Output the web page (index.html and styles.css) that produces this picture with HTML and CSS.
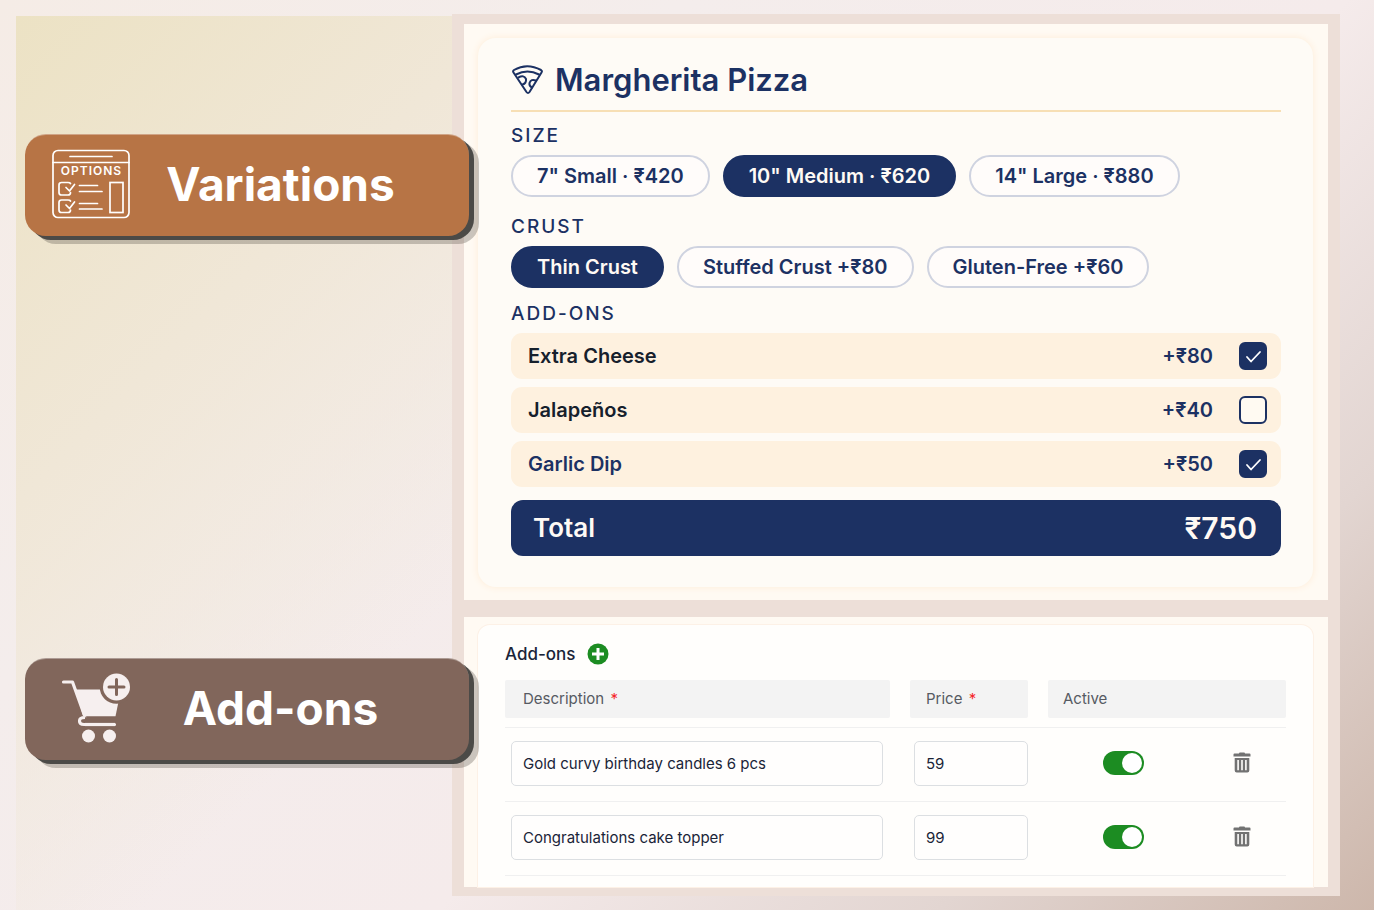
FILE: index.html
```html
<!DOCTYPE html>
<html lang="en">
<head>
<meta charset="utf-8">
<meta name="viewport" content="width=device-width, initial-scale=1">
<title>Margherita Pizza</title>
<link rel="stylesheet" href="styles.css">
</head>
<body>
<main class="stage">
  <div class="tags">
    <h2 class="tag tag-variations">
      <svg class="tag-icon" viewBox="0 0 78 70" fill="none" stroke="#fff" stroke-width="1.7" stroke-linecap="round" stroke-linejoin="round" aria-hidden="true">
        <rect x="1" y="1.5" width="76" height="67" rx="5"/>
        <path d="M1 13.5H77M18 7.5H60"/>
        <text class="icon-word" x="39.500" y="26" text-anchor="middle">OPTIONS</text>
        <path d="M27.500 36.500H45.500M27.500 42.500H50M27.500 54.500H45.500M27.500 60H50"/>
        <rect x="58" y="33.500" width="13" height="30" stroke-linejoin="miter"/>
        <path d="M18.500 34.500C18 33.500 17 33.500 16 33.500H9.500Q7 33.500 7 36V43.500Q7 46 9.500 46H16Q18.500 46 18.500 43.500M14 38.500L17.500 42L22.500 35.500"/>
        <path d="M18.500 52C18 51 17 51 16 51H9.500Q7 51 7 53.500V61Q7 63.500 9.500 63.500H16Q18.500 63.500 18.500 61M14 56L17.500 59.500L22.500 53"/>
      </svg>
      <span class="tag-text">Variations</span>
    </h2>
    <h2 class="tag tag-addons">
      <svg class="tag-icon" viewBox="0 0 78 70" aria-hidden="true">
        <g fill="none" stroke="#f6efef" stroke-width="3.200" stroke-linecap="round" stroke-linejoin="round">
          <path d="M11.500 9H20.500L32 41"/>
          <path d="M33 44.500C28 44.500 27.500 46 27.500 48Q27.500 51.500 32 51.500H62.500"/>
        </g>
        <path fill="#f6efef" d="M24 16.500H69L63.500 43.300H31Z"/>
        <path d="M33 47H64" stroke="#81665b" stroke-width="5.500"/>
        <path d="M33 51.500H63" stroke="#f6efef" stroke-width="3.200"/>
        <circle cx="64.500" cy="14" r="16.800" fill="#81665b"/>
        <circle cx="64.500" cy="14" r="13.500" fill="#f6efef"/>
        <path d="M64.500 6.500V21.500M57 14H72" stroke="#81665b" stroke-width="3" stroke-linecap="round"/>
        <circle cx="36.500" cy="63" r="6.500" fill="#f6efef"/>
        <circle cx="57.500" cy="63" r="6.500" fill="#f6efef"/>
      </svg>
      <span class="tag-text">Add-ons</span>
    </h2>
  </div>

  <div class="frame">
    <section class="panel panel-pizza">
      <form class="card pizza">
        <h1 class="pizza-title">
          <svg class="pizza-icon" viewBox="0 0 32 30" fill="none" stroke="#1c3163" stroke-width="2" stroke-linejoin="round" stroke-linecap="round" aria-hidden="true">
            <path d="M3 5Q16 -2.500 30 5Q31.500 6 30.500 7.500L18.500 27Q17 29 15.500 27L2.500 7.500Q1.500 6 3 5Z"/>
            <path d="M5 9.500Q16.500 3.500 28 9.500"/>
            <path d="M7.500 12.500Q13 9.500 15 14Q15.500 18.500 11.500 19.500"/>
            <path d="M25 15.500Q20 13.500 18.500 18Q18 21.500 21 22.500"/>
          </svg>
          Margherita Pizza
        </h1>
        <fieldset class="group">
          <legend class="group-name">SIZE</legend>
          <div class="chips">
            <label class="chip"><input type="radio" name="size">7" Small · ₹420</label>
            <label class="chip"><input type="radio" name="size" checked>10" Medium · ₹620</label>
            <label class="chip"><input type="radio" name="size">14" Large · ₹880</label>
          </div>
        </fieldset>
        <fieldset class="group">
          <legend class="group-name">CRUST</legend>
          <div class="chips">
            <label class="chip"><input type="radio" name="crust" checked>Thin Crust</label>
            <label class="chip"><input type="radio" name="crust">Stuffed Crust +₹80</label>
            <label class="chip"><input type="radio" name="crust">Gluten-Free +₹60</label>
          </div>
        </fieldset>
        <fieldset class="group">
          <legend class="group-name">ADD-ONS</legend>
          <div class="extras">
            <label class="extra">
              <span class="extra-name">Extra Cheese</span><span class="extra-price">+₹80</span>
              <span class="check"><input type="checkbox" checked><svg viewBox="0 0 28 28" aria-hidden="true"><path d="M8 15L12 19.500L21 10"/></svg></span>
            </label>
            <label class="extra">
              <span class="extra-name">Jalapeños</span><span class="extra-price">+₹40</span>
              <span class="check"><input type="checkbox"><svg viewBox="0 0 28 28" aria-hidden="true"><path d="M8 15L12 19.500L21 10"/></svg></span>
            </label>
            <label class="extra">
              <span class="extra-name extra-accent">Garlic Dip</span><span class="extra-price">+₹50</span>
              <span class="check"><input type="checkbox" checked><svg viewBox="0 0 28 28" aria-hidden="true"><path d="M8 15L12 19.500L21 10"/></svg></span>
            </label>
          </div>
        </fieldset>
        <div class="total"><span>Total</span><output class="total-sum">₹750</output></div>
      </form>
    </section>

    <section class="panel panel-addons">
      <form class="card addons">
        <div class="addons-head">
          <h2 class="addons-title">Add-ons</h2>
          <button class="add" type="button" aria-label="Add an add-on">
            <svg viewBox="0 0 22 22" aria-hidden="true"><circle cx="11" cy="11" r="10.500" fill="#1c8c22"/><path d="M11 5V17M5 11H17" stroke="#fff" stroke-width="3"/></svg>
          </button>
        </div>
        <table class="list">
          <colgroup><col><col class="col-price"><col class="col-active"><col class="col-delete"></colgroup>
          <thead>
            <tr>
              <th><div class="head-cell">Description <span class="req">*</span></div></th>
              <th><div class="head-cell head-price">Price <span class="req">*</span></div></th>
              <th colspan="2"><div class="head-cell head-active">Active</div></th>
            </tr>
          </thead>
          <tbody>
            <tr>
              <td class="cell-name"><input class="field" type="text" aria-label="Description" value="Gold curvy birthday candles 6 pcs"></td>
              <td class="cell-price"><input class="field" type="text" aria-label="Price" value="59"></td>
              <td class="cell-mid"><input class="switch" type="checkbox" role="switch" aria-label="Active" checked></td>
              <td class="cell-mid"><button class="trash" type="button" aria-label="Delete"><svg viewBox="0 0 18 22" aria-hidden="true"><path fill="#727272" fill-rule="evenodd" d="M6 1.500Q6 .5 7 .5H11Q12 .5 12 1.500H16.500Q17.500 1.500 17.500 2.500V4.500H.5V2.500Q.5 1.500 1.500 1.500ZM1.700 6H16.300V18.500Q16.300 20.500 14.300 20.500H3.700Q1.700 20.500 1.700 18.500ZM4.300 8V18.200H5.900V8ZM8.200 8V18.200H9.800V8ZM12.100 8V18.200H13.700V8Z"/></svg></button></td>
            </tr>
            <tr>
              <td class="cell-name"><input class="field" type="text" aria-label="Description" value="Congratulations cake topper"></td>
              <td class="cell-price"><input class="field" type="text" aria-label="Price" value="99"></td>
              <td class="cell-mid"><input class="switch" type="checkbox" role="switch" aria-label="Active" checked></td>
              <td class="cell-mid"><button class="trash" type="button" aria-label="Delete"><svg viewBox="0 0 18 22" aria-hidden="true"><path fill="#727272" fill-rule="evenodd" d="M6 1.500Q6 .5 7 .5H11Q12 .5 12 1.500H16.500Q17.500 1.500 17.500 2.500V4.500H.5V2.500Q.5 1.500 1.500 1.500ZM1.700 6H16.300V18.500Q16.300 20.500 14.300 20.500H3.700Q1.700 20.500 1.700 18.500ZM4.300 8V18.200H5.900V8ZM8.200 8V18.200H9.800V8ZM12.100 8V18.200H13.700V8Z"/></svg></button></td>
            </tr>
          </tbody>
        </table>
      </form>
    </section>
  </div>
</main>
</body>
</html>
```
FILE: styles.css
```css
* { box-sizing: border-box; }

:root {
  --navy: #1c3163;
  --green: #1c8c22;
}

body {
  margin: 0;
  min-height: 100vh;
  display: flex;
  font-family: Inter, "Liberation Sans", sans-serif;
  color: var(--navy);
  background: linear-gradient(135deg, #f5ece6 0%, #f4edec 30%, #f5ebeb 59%, #e2d5d1 81%, #cdb7ab 100%);
}

h1, h2 { margin: 0; }
input, button { font: inherit; color: inherit; margin: 0; }

.stage {
  flex: 1;
  margin: 16px 34px 0 16px;
  display: grid;
  grid-template-columns: 436px 1fr;
  align-items: start;
  background: linear-gradient(135deg, #ece2c4 0%, #f0e7d7 22%, rgba(245, 236, 234, 0) 46%);
}

/* Left-hand tags overlap the frame's edge */
.tags {
  position: relative;
  z-index: 1;
  display: flex;
  flex-direction: column;
  gap: 422px;
  padding: 118px 0 0 9px;
  margin-right: -17px;
}

.tag {
  display: flex;
  align-items: center;
  height: 102px;
  padding: 0 38px 3px 27px;
  border-radius: 21px;
  border-top: 1px solid rgba(255, 255, 255, .35);
  color: #fff;
  font-size: 46px;
  line-height: 56px;
  font-weight: 700;
  box-shadow: 5px 4px 0 #4b4a47, 10px 8px 0 rgba(90, 84, 76, .32);
}
.tag-variations { background: #b77445; }
.tag-addons { background: #81665b; }
.tag-icon { width: 78px; height: 70px; flex: none; }
.tag-text { flex: 1; text-align: center; }
.icon-word { font: 600 12px Inter, sans-serif; letter-spacing: 1px; fill: #fff; stroke: none; }

.frame {
  margin-top: -2px;
  padding: 10px 12px 9px;
  background: #eddfd8;
  display: flex;
  flex-direction: column;
  gap: 17px;
}

.panel { background: #fffaf3; padding: 14px 15px 13px 14px; }
.panel-addons { padding: 8px 15px 0 14px; }

.card { background: #fefbf6; }

.pizza {
  padding: 20px 32px 31px 33px;
  border-radius: 18px;
  box-shadow: 0 0 6px 1px #feefdd;
}

.pizza-title {
  display: flex;
  align-items: center;
  gap: 12px;
  padding: 2px 0 10px;
  border-bottom: 2px solid #f7dfb5;
  font-size: 31px;
  line-height: 40px;
  font-weight: 600;
}
.pizza-icon { width: 32px; height: 30px; flex: none; }

.group { border: 0; margin: 12px 0 0; padding: 0; min-width: 0; }
.group + .group { margin-top: 18px; }
.group + .group + .group { margin-top: 14px; }
.group-name {
  padding: 0;
  margin-bottom: 7px;
  font-size: 19px;
  line-height: 24px;
  font-weight: 500;
  letter-spacing: 2px;
}

.chips { display: flex; flex-wrap: wrap; gap: 13px; }
.chip {
  display: flex;
  align-items: center;
  height: 42px;
  padding: 0 24px;
  border: 2px solid #cfd3e0;
  border-radius: 21px;
  background: #fffcfa;
  font-size: 20px;
  line-height: 24px;
  font-weight: 600;
  cursor: pointer;
}
.chip input { appearance: none; width: 0; height: 0; }
.chip:has(input:checked) { background: var(--navy); border-color: var(--navy); color: #fffaf5; }

.extras { display: flex; flex-direction: column; gap: 8px; }
.extra {
  display: flex;
  align-items: center;
  height: 46px;
  padding: 0 14px 0 17px;
  border-radius: 11px;
  background: #fef1df;
  font-size: 20px;
  line-height: 24px;
  font-weight: 600;
}
.extra-name { flex: 1; color: #16202c; }
.extra-accent { color: var(--navy); }
.extra-price { margin-right: 26px; }

.check { display: grid; width: 28px; height: 28px; }
.check input, .check svg { grid-area: 1 / 1; }
.check input {
  appearance: none;
  border: 2px solid var(--navy);
  border-radius: 6px;
  background: #fffaf2;
}
.check input:checked { background: var(--navy); }
.check svg { visibility: hidden; pointer-events: none; fill: none; stroke: #fff; stroke-width: 1.8; stroke-linecap: round; stroke-linejoin: round; }
.check input:checked + svg { visibility: visible; }

.total {
  display: flex;
  align-items: center;
  justify-content: space-between;
  margin-top: 13px;
  height: 56px;
  padding: 0 24px 0 22px;
  border-radius: 12px;
  background: var(--navy);
  color: #fffaf5;
  font-size: 26px;
  line-height: 36px;
  font-weight: 600;
}
.total-sum { font-size: 30px; }

.addons {
  padding: 14px 27px 11px;
  border-radius: 12px 12px 0 0;
  background: #fffefc;
  box-shadow: 0 0 0 1px #fdf1e6;
  color: #1a2438;
}
.addons-head { display: flex; align-items: center; gap: 12px; height: 30px; }
.addons-title { font-size: 17px; line-height: 24px; font-weight: 500; }
.add { display: flex; padding: 0; border: 0; background: none; }
.add svg { width: 22px; height: 22px; }

.list { width: 100%; margin-top: 11px; border-collapse: collapse; table-layout: fixed; }
.col-price { width: 138px; }
.col-active { width: 150px; }
.col-delete { width: 88px; }
.list tr { border-bottom: 1px solid #f0f0f0; }
.list th { padding: 0 0 9px; text-align: left; font-weight: 400; }
.head-cell {
  margin-right: 20px;
  padding: 7px 18px;
  border-radius: 2px;
  background: #f3f3f3;
  color: #565a62;
  font-size: 15px;
  line-height: 24px;
}
.head-price { padding: 7px 16px; }
.head-active { margin-right: 0; padding: 7px 15px; }
.req { margin-left: 2px; color: #f5262b; }

.list td { padding: 13px 0 15px; vertical-align: middle; }
.list .cell-name { padding-left: 6px; padding-right: 27px; }
.list .cell-price { padding-left: 4px; padding-right: 20px; }
.list .cell-mid { text-align: center; padding: 8px 0 12px; }
.field {
  display: block;
  width: 100%;
  height: 45px;
  padding: 0 11px;
  border: 1px solid #dcdfe2;
  border-radius: 5px;
  background: #fffefd;
  font-size: 15px;
}

.switch {
  appearance: none;
  display: inline-flex;
  align-items: center;
  justify-content: flex-start;
  vertical-align: middle;
  width: 41px;
  height: 24px;
  padding: 0 2px;
  border-radius: 12px;
  background: #a9adb2;
}
.switch::before { content: ""; width: 20px; height: 20px; border-radius: 50%; background: #fff; }
.switch:checked { justify-content: flex-end; background: var(--green); }

.trash { display: inline-flex; vertical-align: middle; padding: 0; border: 0; background: none; }
.trash svg { width: 18px; height: 22px; }
```
